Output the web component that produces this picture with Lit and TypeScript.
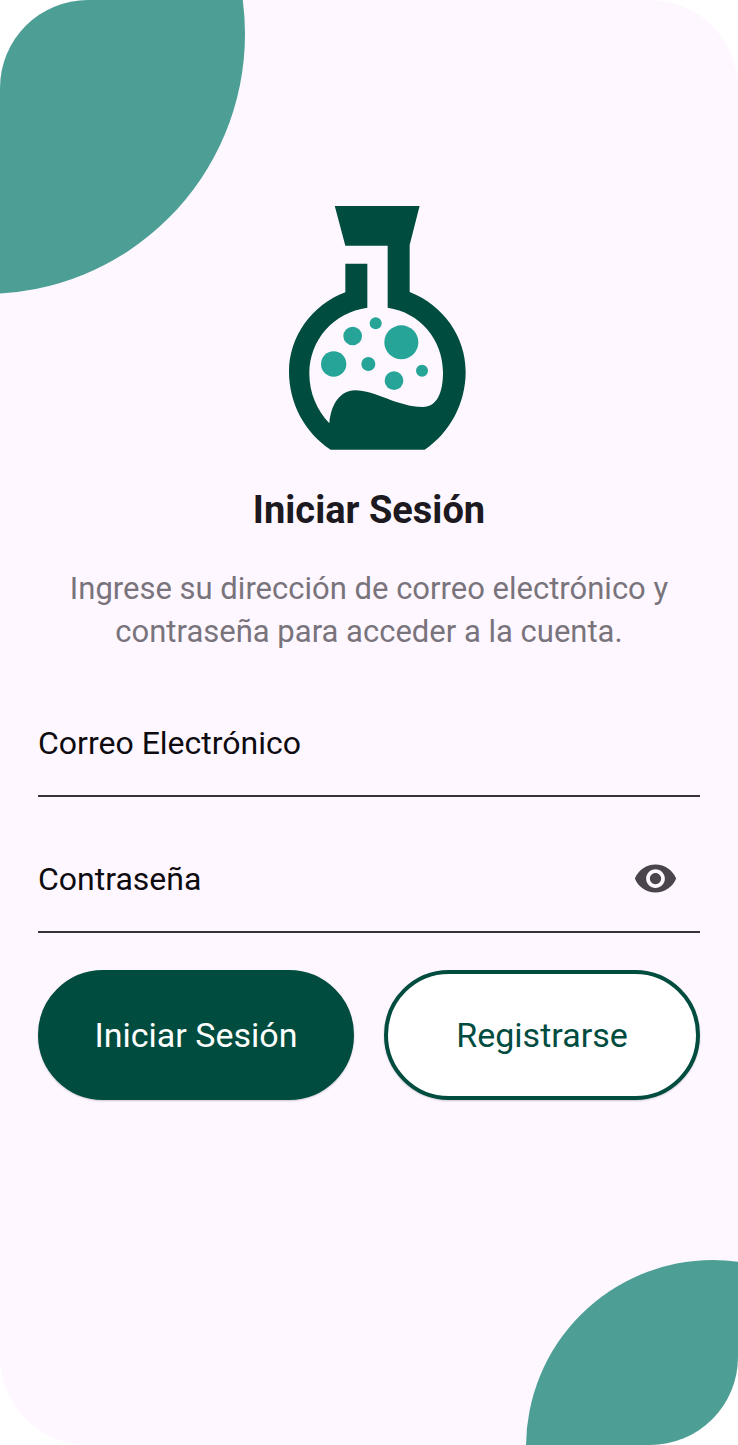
import { LitElement, html, css, svg } from "lit";
import { customElement, state } from "lit/decorators.js";

const bubbles = [
  { x: 318, y: 399, r: 18 },
  { x: 249, y: 437, r: 28 },
  { x: 395, y: 456, r: 51 },
  { x: 192, y: 521, r: 38 },
  { x: 296, y: 521, r: 21 },
  { x: 457, y: 541, r: 18 },
  { x: 373, y: 571, r: 28 },
];

@customElement("flask-logo")
export class FlaskLogo extends LitElement {
  static styles = css`
    :host {
      display: block;
      width: 194px;
    }
    .logo {
      display: block;
      width: 100%;
    }
    .glass {
      fill: #004c3f;
    }
    .bubble {
      fill: #26a498;
    }
  `;

  render() {
    return html`
      <svg class="logo" viewBox="7 47 582 732" role="img" aria-label="Logo">
        <path
          class="glass"
          fill-rule="evenodd"
          d="M195 46H450L420 164V305C522 345 588 440 588 544C588 640 540 727 465 778H183C106 727 58 640 58 544C58 440 126 343 227 306V220H293V352C192 366 119 448 119 550C119 607 142 660 179 699C184 640 212 601 256 600C316 600 385 650 459 650C502 650 520 607 520 545C519 446 450 366 354 352V166H227Z"
        />
        ${bubbles.map((b) => svg`<circle class="bubble" cx=${b.x} cy=${b.y} r=${b.r} />`)}
      </svg>
    `;
  }
}

@customElement("app-root")
export class AppRoot extends LitElement {
  static styles = css`
    :host {
      display: block;
      background: #ffffff;
      font-family: Roboto, "Liberation Sans", sans-serif;
    }
    * {
      box-sizing: border-box;
    }
    .screen {
      position: relative;
      overflow: hidden;
      min-height: 100vh;
      padding: 206px 38px 38px;
      border-radius: 88px;
      background: #fef7ff;
      display: flex;
      flex-direction: column;
      align-items: center;
    }
    .blob {
      position: absolute;
      border-radius: 50%;
      background: #4d9f96;
    }
    .blob-top {
      width: 520px;
      height: 520px;
      top: -226px;
      left: -275px;
    }
    .blob-bottom {
      width: 374px;
      height: 374px;
      right: -162px;
      bottom: -189px;
    }
    .title {
      margin: 36px 0 0;
      font-size: 38px;
      line-height: 48px;
      font-weight: 700;
      color: #1c1920;
    }
    .intro {
      margin: 33px 0 0;
      font-size: 31px;
      line-height: 43px;
      text-align: center;
      color: #79747c;
    }
    .form {
      width: 100%;
      margin-top: 37px;
      display: flex;
      flex-direction: column;
      gap: 29px;
    }
    .field {
      display: grid;
      grid-template-columns: 1fr auto;
      align-items: center;
      height: 107px;
      border-bottom: 2px solid #38333b;
    }
    .label {
      grid-area: 1 / 1;
      font-size: 32px;
      line-height: 40px;
      color: #0d0b0f;
      pointer-events: none;
    }
    .input {
      grid-area: 1 / 1;
      width: 100%;
      height: 100%;
      padding: 0;
      border: 0;
      outline: 0;
      background: transparent;
      font: inherit;
      font-size: 32px;
      color: #0d0b0f;
    }
    .input:not(:placeholder-shown) + .label {
      align-self: start;
      font-size: 22px;
      line-height: 28px;
    }
    .reveal {
      grid-area: 1 / 2;
      width: 90px;
      height: 90px;
      padding: 0;
      border: 0;
      border-radius: 50%;
      background: transparent;
      display: grid;
      place-items: center;
      cursor: pointer;
    }
    .eye {
      width: 45px;
      height: 45px;
      fill: #4a444d;
    }
    .actions {
      display: grid;
      grid-template-columns: 1fr 1fr;
      gap: 30px;
      margin-top: 8px;
    }
    .button {
      height: 130px;
      padding: 0 16px;
      border: 4px solid #004c3f;
      border-radius: 65px;
      background: #ffffff;
      box-shadow: 0 1px 2px rgba(0, 0, 0, 0.2);
      font: inherit;
      font-size: 34px;
      line-height: 40px;
      color: #004c3f;
      cursor: pointer;
    }
    .primary {
      background: #004c3f;
      color: #ffffff;
    }
  `;

  @state() private visible = false;

  private toggle() {
    this.visible = !this.visible;
  }

  private submit(event: Event) {
    event.preventDefault();
  }

  render() {
    return html`
      <main class="screen">
        <div class="blob blob-top"></div>
        <div class="blob blob-bottom"></div>
        <flask-logo></flask-logo>
        <h1 class="title">Iniciar Sesión</h1>
        <p class="intro">
          Ingrese su dirección de correo electrónico y contraseña para acceder a la cuenta.
        </p>
        <form class="form" @submit=${this.submit}>
          <div class="field">
            <input class="input" id="email" type="email" placeholder=" " autocomplete="email" />
            <label class="label" for="email">Correo Electrónico</label>
          </div>
          <div class="field">
            <input
              class="input"
              id="password"
              type=${this.visible ? "text" : "password"}
              placeholder=" "
              autocomplete="current-password"
            />
            <label class="label" for="password">Contraseña</label>
            <button
              class="reveal"
              type="button"
              aria-label="Mostrar contraseña"
              aria-pressed=${this.visible}
              @click=${this.toggle}
            >
              <svg class="eye" viewBox="0 0 24 24" aria-hidden="true">
                <path
                  d="M12 4.5C7 4.5 2.73 7.61 1 12c1.73 4.39 6 7.5 11 7.5s9.27-3.11 11-7.5c-1.73-4.39-6-7.5-11-7.5zM12 17c-2.76 0-5-2.24-5-5s2.24-5 5-5 5 2.24 5 5-2.24 5-5 5zm0-8c-1.66 0-3 1.34-3 3s1.34 3 3 3 3-1.34 3-3-1.34-3-3-3z"
                />
              </svg>
            </button>
          </div>
          <div class="actions">
            <button class="button primary" type="submit">Iniciar Sesión</button>
            <button class="button" type="button">Registrarse</button>
          </div>
        </form>
      </main>
    `;
  }
}
